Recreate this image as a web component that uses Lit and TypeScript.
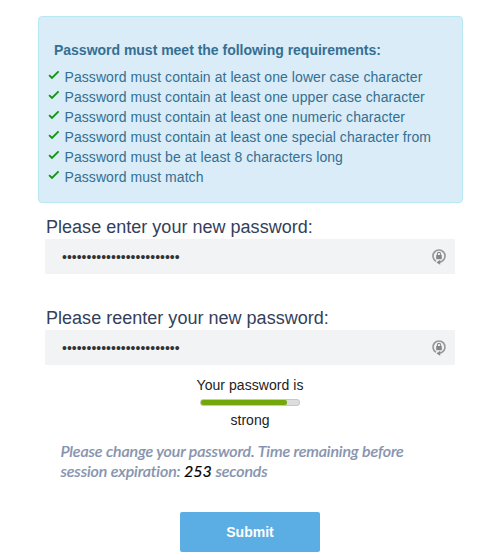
import { LitElement, html, css, svg } from "lit";
import { customElement, property } from "lit/decorators.js";

const check = svg`<path d="M1.1 5.1 L4 8 L10.6 1.4" fill="none" stroke="#109510" stroke-width="1.8"/>`;

@customElement("requirement-list")
class RequirementList extends LitElement {
  @property({ attribute: false }) items: string[] = [];

  static styles = css`
    :host {
      display: block;
      box-sizing: border-box;
      width: 425px;
      height: 187px;
      margin-left: 38px;
      border: 1px solid #b8e8f1;
      border-radius: 4px;
      background: #d9ecf7;
      color: #356f92;
      padding: 23px 9px 0;
    }
    .title {
      margin: 0 0 7px 6px;
      font-size: 14px;
      line-height: 20px;
      font-weight: 700;
      letter-spacing: -0.015px;
      white-space: nowrap;
    }
    ul {
      list-style: none;
      margin: 0;
      padding: 0;
    }
    li {
      display: flex;
      align-items: center;
      gap: 4.5px;
      height: 20px;
      font-size: 14px;
      line-height: 20px;
      letter-spacing: 0.07px;
      white-space: nowrap;
    }
    svg {
      width: 12px;
      height: 10px;
      margin-top: -4px;
    }
  `;

  render() {
    return html`
      <div class="title">Password must meet the following requirements:</div>
      <ul>
        ${this.items.map(
          (text) => html`<li><svg viewBox="0 0 12 10">${check}</svg><span>${text}</span></li>`
        )}
      </ul>
    `;
  }
}

@customElement("password-field")
class PasswordField extends LitElement {
  @property() label = "";

  static styles = css`
    :host {
      display: block;
      width: 410px;
      margin-left: 45px;
    }
    label {
      display: block;
      height: 24px;
      padding-left: 1px;
      font-size: 18px;
      line-height: 24px;
      letter-spacing: 0.02px;
      color: #34405a;
      white-space: nowrap;
    }
    .box {
      display: flex;
      align-items: center;
      height: 35px;
      background: #f1f3f5;
    }
    input {
      flex: 1;
      min-width: 0;
      height: 35px;
      box-sizing: border-box;
      border: 0;
      outline: 0;
      padding: 0 0 0 17px;
      background: transparent;
      color: #333;
      font: 14px "Liberation Sans", Arial, sans-serif;
    }
    svg {
      width: 16px;
      height: 18px;
      margin-right: 8px;
    }
  `;

  render() {
    return html`
      <label for="field">${this.label}</label>
      <div class="box">
        <input id="field" type="password" .value=${"x".repeat(24)} />
        <svg viewBox="0 0 16 18">
          <path d="M5 13.2 A6 6 0 1 1 11 13.2 L8 14.6" fill="none" stroke="#999" stroke-width="1.7" />
          <path d="M9.2 11.8 L9.2 16.8 L5.4 14.4 Z" fill="#8a8a8a" />
          <rect x="5.2" y="7" width="5.6" height="4.2" fill="#858585" />
          <path d="M6.4 7.4 V6 A1.6 1.6 0 0 1 9.6 6 V7.4" fill="none" stroke="#8a8a8a" stroke-width="1.1" />
        </svg>
      </div>
    `;
  }
}

@customElement("app-root")
class AppRoot extends LitElement {
  @property({ type: Number }) strength = 88;
  @property({ type: Number }) seconds = 253;

  static styles = css`
    :host {
      display: block;
      box-sizing: border-box;
      width: 500px;
      height: 560px;
      padding-top: 16px;
      overflow: hidden;
      background: #fff;
      font-family: "Liberation Sans", Arial, sans-serif;
    }
    .first {
      margin-top: 12px;
    }
    .second {
      margin-top: 32px;
    }
    .strength {
      display: flex;
      flex-direction: column;
      align-items: center;
      margin-top: 10px;
      font-size: 14px;
      line-height: 20px;
      letter-spacing: 0.05px;
      color: #222;
    }
    .meter {
      box-sizing: border-box;
      width: 100px;
      height: 7px;
      margin: 4px 0;
      border: 1px solid #c8c8c8;
      border-radius: 3px;
      background: #ddd;
    }
    .fill {
      height: 5px;
      border-radius: 2px;
      background: #73a80a;
    }
    .notice {
      margin: 11px 0 0 60.5px;
      font: italic 500 16px/20px Lato, sans-serif;
      font-variant-ligatures: none;
      letter-spacing: -0.125px;
      color: #8592ad;
      -webkit-text-stroke: 0.2px #8592ad;
      white-space: nowrap;
    }
    .count {
      color: #000;
      font-weight: 400;
      letter-spacing: 0;
      -webkit-text-stroke: 0.2px #000;
    }
    button {
      display: block;
      width: 140px;
      height: 40px;
      margin: 31px auto 0;
      padding: 0;
      border: 0;
      border-radius: 2px;
      background: #5aaee4;
      color: #fff;
      font: 700 14px "Liberation Sans", Arial, sans-serif;
    }
  `;

  render() {
    return html`
      <requirement-list
        .items=${[
          "Password must contain at least one lower case character",
          "Password must contain at least one upper case character",
          "Password must contain at least one numeric character",
          "Password must contain at least one special character from",
          "Password must be at least 8 characters long",
          "Password must match",
        ]}
      ></requirement-list>
      <password-field class="first" label="Please enter your new password:"></password-field>
      <password-field class="second" label="Please reenter your new password:"></password-field>
      <div class="strength">
        <span>Your password is</span>
        <div class="meter"><div class="fill" style="width:${this.strength}%"></div></div>
        <span>strong</span>
      </div>
      <div class="notice">
        Please change your password. Time remaining before<br />session expiration:
        <span class="count">${this.seconds}</span> seconds
      </div>
      <button>Submit</button>
    `;
  }
}
